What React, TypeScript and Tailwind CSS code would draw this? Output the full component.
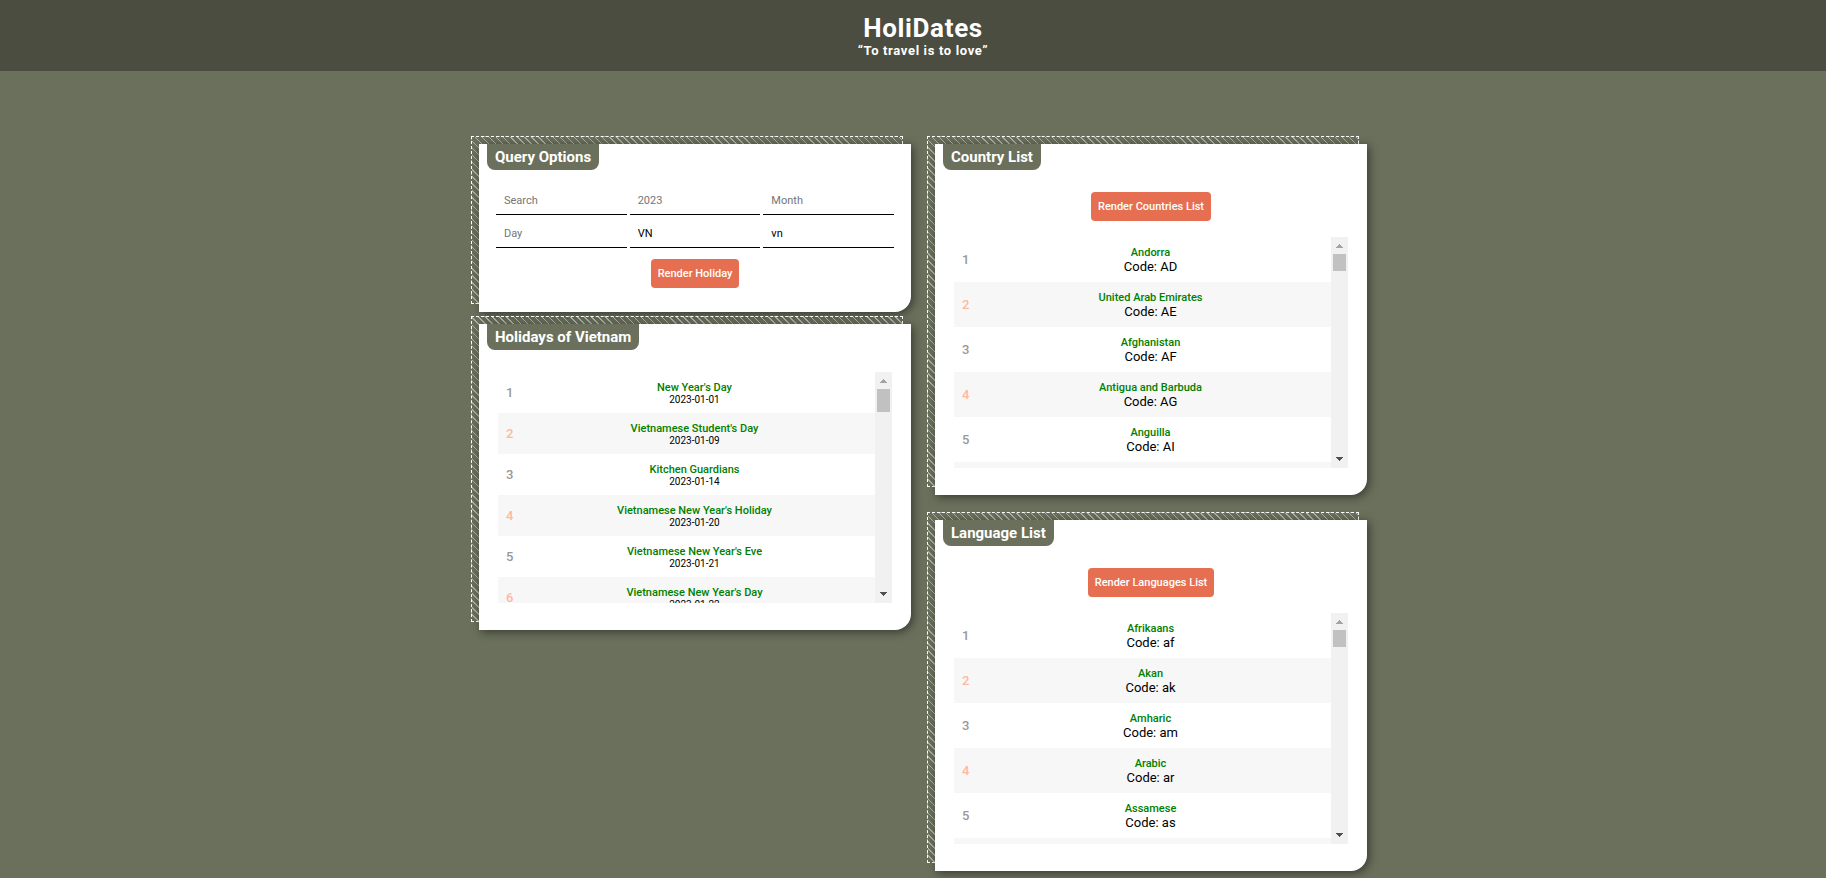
import React from "react";

type Entry = { name: string; detail: string };

const holidays: Entry[] = [
  { name: "New Year's Day", detail: "2023-01-01" },
  { name: "Vietnamese Student's Day", detail: "2023-01-09" },
  { name: "Kitchen Guardians", detail: "2023-01-14" },
  { name: "Vietnamese New Year's Holiday", detail: "2023-01-20" },
  { name: "Vietnamese New Year's Eve", detail: "2023-01-21" },
  { name: "Vietnamese New Year's Day", detail: "2023-01-22" },
];

const countries: Entry[] = [
  { name: "Andorra", detail: "Code: AD" },
  { name: "United Arab Emirates", detail: "Code: AE" },
  { name: "Afghanistan", detail: "Code: AF" },
  { name: "Antigua and Barbuda", detail: "Code: AG" },
  { name: "Anguilla", detail: "Code: AI" },
];

const languages: Entry[] = [
  { name: "Afrikaans", detail: "Code: af" },
  { name: "Akan", detail: "Code: ak" },
  { name: "Amharic", detail: "Code: am" },
  { name: "Arabic", detail: "Code: ar" },
  { name: "Assamese", detail: "Code: as" },
];

function Card({ title, children }: { title: string; children: React.ReactNode }) {
  return (
    <section className="relative">
      <div className="absolute -top-2 right-2 bottom-2 -left-2 border border-dashed border-white bg-[repeating-linear-gradient(45deg,transparent_0_4px,#adb0a5_4px_5px)]" />
      <div className="relative rounded-br-2xl bg-white px-[17px] pb-6 shadow-[2px_2px_10px_rgba(0,0,0,0.5)]">
        <h2 className="absolute top-0 left-2 rounded-b-lg bg-[#6b705c] px-2 py-[3px] text-[15px] leading-5 font-bold text-white">
          {title}
        </h2>
        {children}
      </div>
    </section>
  );
}

function Action({ children }: { children: React.ReactNode }) {
  return (
    <button
      type="button"
      className="mx-auto block h-[29px] rounded bg-[#e76f51] px-[7px] pt-0.5 text-[11px] font-medium text-white"
    >
      {children}
    </button>
  );
}

function ScrollTrack({ thumb }: { thumb: string }) {
  return (
    <div aria-hidden="true" className="flex w-[17px] shrink-0 flex-col items-center justify-between bg-[#f1f1f1]">
      <div className="flex w-full flex-col items-center">
        <svg width="17" height="17" viewBox="0 0 17 17" shapeRendering="crispEdges" fill="#a3a3a3">
          <path d="M8 7h1v1h1v1h1v1h1v1H5v-1h1V9h1V8h1z" />
        </svg>
        <div className={`w-[13px] bg-[#c1c1c1] ${thumb}`} />
      </div>
      <svg width="17" height="17" viewBox="0 0 17 17" shapeRendering="crispEdges" fill="#505050">
        <path d="M5 6h7v1h-1v1h-1v1H9v1H8V9H7V8H6V7H5z" />
      </svg>
    </div>
  );
}

function EntryList({
  items,
  detail,
  thumb,
  more = false,
}: {
  items: Entry[];
  detail: string;
  thumb: string;
  more?: boolean;
}) {
  return (
    <div className="mx-0.5 mb-[3px] flex h-[231px] overflow-hidden">
      <ol className="flex-1">
        {items.map((item, i) => (
          <li key={item.name} className="flex items-center py-[9px] pl-2 even:bg-[#f7f7f7]">
            <span className={`w-2 text-[13px] leading-5 font-medium ${i % 2 ? "text-[#ffb8a0]" : "text-[#999999]"}`}>
              {i + 1}
            </span>
            <div className="flex-1 text-center">
              <p className="text-[11px] leading-[14px] font-medium text-[#008000]">{item.name}</p>
              <p className={detail}>{item.detail}</p>
            </div>
          </li>
        ))}
        {more && <li className="h-10 even:bg-[#f7f7f7]" />}
      </ol>
      <ScrollTrack thumb={thumb} />
    </div>
  );
}

function Field({ label, value }: { label: string; value?: string }) {
  return (
    <input
      aria-label={label}
      placeholder={label}
      defaultValue={value}
      className="h-[30px] min-w-0 rounded-none border-b border-black px-2 pt-0.5 text-[11px] text-black outline-none placeholder:text-[#757575]"
    />
  );
}

export default function App() {
  return (
    <div className="min-h-screen bg-[#6b705c] pb-[7px] font-[Roboto,sans-serif]">
      <header className="h-[71px] bg-[#4b4d40] pt-[13px] pl-5 text-center text-white">
        <h1 className="text-[26px] leading-[30px] font-bold tracking-wide">HoliDates</h1>
        <p className="text-[13px] leading-[15px] font-bold tracking-wider">“To travel is to love”</p>
      </header>
      <main className="flex items-start justify-center gap-6 pt-[73px] pl-5">
        <div className="flex w-[432px] flex-col gap-3">
          <Card title="Query Options">
            <form className="pt-[41px]">
              <div className="mb-[11px] grid grid-cols-3 gap-[3px]">
                <Field label="Search" />
                <Field label="2023" />
                <Field label="Month" />
                <Field label="Day" />
                <Field label="Country" value="VN" />
                <Field label="Language" value="vn" />
              </div>
              <Action>Render Holiday</Action>
            </form>
          </Card>
          <Card title="Holidays of Vietnam">
            <div className="pt-12">
              <EntryList items={holidays} detail="text-[10px] leading-[9px]" thumb="h-[23px]" />
            </div>
          </Card>
        </div>
        <div className="flex w-[432px] flex-col gap-[25px]">
          <Card title="Country List">
            <div className="flex flex-col gap-4 pt-12">
              <Action>Render Countries List</Action>
              <EntryList items={countries} detail="text-[13px] leading-[13px]" thumb="h-[17px]" more />
            </div>
          </Card>
          <Card title="Language List">
            <div className="flex flex-col gap-4 pt-12">
              <Action>Render Languages List</Action>
              <EntryList items={languages} detail="text-[13px] leading-[13px]" thumb="h-[17px]" more />
            </div>
          </Card>
        </div>
      </main>
    </div>
  );
}
